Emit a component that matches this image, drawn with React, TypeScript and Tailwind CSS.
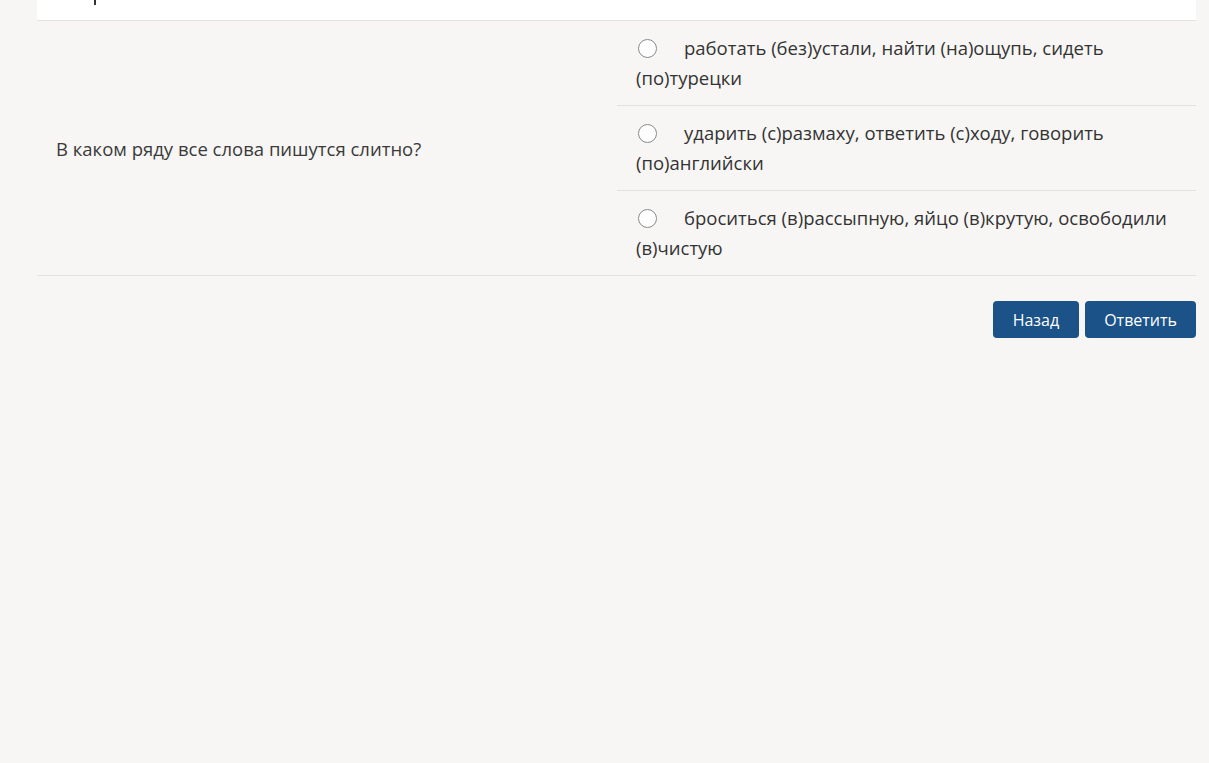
import React from "react";

const options = [
  "работать (без)устали, найти (на)ощупь, сидеть (по)турецки",
  "ударить (с)размаху, ответить (с)ходу, говорить (по)английски",
  "броситься (в)рассыпную, яйцо (в)крутую, освободили (в)чистую",
];

export default function App() {
  return (
    <div
      className="min-h-[763px] w-full bg-[#f7f6f4] text-[#333]"
      style={{ fontFamily: '"Open Sans", "Noto Sans", sans-serif' }}
    >
      <div className="mx-[37px] w-[1159px]">
        <div className="h-[21px] border-b border-[#e2e1dd] bg-white pl-[57px]">
          <div className="h-[5px] w-[2px] bg-[#333]"></div>
        </div>
        <div className="flex border-b border-[#e2e1dd]">
          <div className="flex w-[580px] items-center px-[19px] pt-[2px] text-[18.5px] text-[#3a3a3a]">
            В каком ряду все слова пишутся слитно?
          </div>
          <div className="flex-1">
            {options.map((o, i) => (
              <div
                key={i}
                className={
                  "px-[19px] py-3 text-[18.5px] leading-[30px] " +
                  (i < options.length - 1 ? "border-b border-[#e2e1dd]" : "")
                }
              >
                <span className="mr-[27px] ml-[2px] inline-block h-[19px] w-[19px] translate-y-[3px] rounded-full border-[1.5px] border-[#8a8a8a] bg-white align-baseline"></span>
                {o}
              </div>
            ))}
          </div>
        </div>
        <div className="flex justify-end gap-[6px] pt-[25px]">
          <button className="h-[37px] rounded-[4px] bg-[#1b5288] px-[20px] text-[16px] text-white">
            Назад
          </button>
          <button className="h-[37px] rounded-[4px] bg-[#1b5288] px-[19px] text-[16px] text-white">
            Ответить
          </button>
        </div>
      </div>
    </div>
  );
}
